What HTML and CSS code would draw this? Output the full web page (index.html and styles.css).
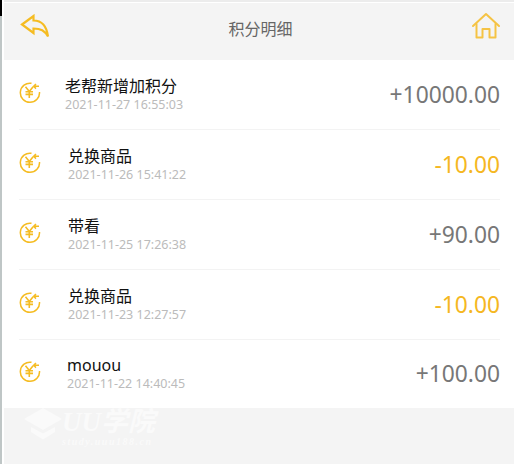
FILE: index.html
```html
<!DOCTYPE html>
<html lang="zh">
<head>
  <meta charset="UTF-8">
  <meta name="viewport" content="width=device-width, initial-scale=1.0">
  <title>积分明细</title>
  <link rel="stylesheet" href="styles.css">
</head>
<body>
  <div class="edge"></div>
  <section class="page">
    <header class="topBar">
      <svg class="backIcon" width="30" height="25" viewBox="0 0 30 25">
        <path d="M2 10.5 L13.5 2 L13.5 6.5 C21 6.5 26.5 11 28 22.5 C24.5 16.5 21 14.5 13.5 14.5 L13.5 19 Z" />
      </svg>
      <h1>积分明细</h1>
      <svg class="homeIcon" width="30" height="28" viewBox="0 0 30 28">
        <path d="M2 14 L15 2 L28 14" />
        <path d="M5.5 12 V25.5 H11.5 V17 H18.5 V25.5 H24.5 V12" />
      </svg>
    </header>

    <ul class="logList">
      <li class="logItem">
        <svg class="coinIcon" width="22" height="22" viewBox="0 0 22 22"><use href="#coin"/></svg>
        <div class="logText first">
          <span class="logName">老帮新增加积分</span>
          <span class="logDate">2021-11-27 16:55:03</span>
        </div>
        <span class="amount plus">+10000.00</span>
      </li>
      <li class="logItem">
        <svg class="coinIcon" width="22" height="22" viewBox="0 0 22 22"><use href="#coin"/></svg>
        <div class="logText">
          <span class="logName">兑换商品</span>
          <span class="logDate">2021-11-26 15:41:22</span>
        </div>
        <span class="amount minus">-10.00</span>
      </li>
      <li class="logItem">
        <svg class="coinIcon" width="22" height="22" viewBox="0 0 22 22"><use href="#coin"/></svg>
        <div class="logText">
          <span class="logName">带看</span>
          <span class="logDate">2021-11-25 17:26:38</span>
        </div>
        <span class="amount plus">+90.00</span>
      </li>
      <li class="logItem">
        <svg class="coinIcon" width="22" height="22" viewBox="0 0 22 22"><use href="#coin"/></svg>
        <div class="logText">
          <span class="logName">兑换商品</span>
          <span class="logDate">2021-11-23 12:27:57</span>
        </div>
        <span class="amount minus">-10.00</span>
      </li>
      <li class="logItem">
        <svg class="coinIcon" width="22" height="22" viewBox="0 0 22 22"><use href="#coin"/></svg>
        <div class="logText">
          <span class="logName">mouou</span>
          <span class="logDate">2021-11-22 14:40:45</span>
        </div>
        <span class="amount plus">+100.00</span>
      </li>
    </ul>

    <footer class="bottom">
      <div class="mark">
        <svg width="38" height="32" viewBox="0 0 38 32">
          <path d="M19 0 L38 11 L19 22 L0 11 Z" />
          <path d="M7 19 L19 25.5 L31 19 V24 L19 31.5 L7 24 Z" />
        </svg>
        <div class="markText">
          <span class="markName">UU学院</span>
          <span class="markUrl">study.uuu188.cn</span>
        </div>
      </div>
    </footer>
  </section>

  <svg class="defs" width="0" height="0">
    <defs>
      <g id="coin" fill="none" stroke="#f5bc22">
        <path d="M12.5 1.3 A9.6 9.6 0 1 0 20.5 10" stroke-width="1.5"/>
        <path d="M6.5 4.8 L10.3 9.5 L14.1 4.8 M6.5 9.8 H14 M6.5 12.4 H14 M10.3 9.5 V16" stroke-width="1.6"/>
        <path d="M20 4.3 H14.8 M17 2 L14.7 4.3 L17 6.6" stroke-width="1.5"/>
      </g>
    </defs>
  </svg>
</body>
</html>
```

FILE: styles.css
```css
* {
  box-sizing: border-box;
}

html, body {
  height: 100%;
}

body {
  margin: 0;
  display: flex;
  overflow: hidden;
  background: #fff;
  font-family: "Noto Sans", "Noto Sans CJK SC", sans-serif;
}

.edge {
  width: 2px;
  margin-right: 2px;
  flex-shrink: 0;
  background: linear-gradient(#000 16px, #bfc6c6 16px);
}

.page {
  flex: 1;
  display: flex;
  flex-direction: column;
  border-top: 2px solid #ececec;
  padding-top: 1px;
}

.topBar {
  height: 57px;
  display: flex;
  align-items: center;
  justify-content: space-between;
  padding: 0 13px 8px 16px;
  background: #f4f4f4;
}
.topBar h1 {
  margin: 0;
  font-size: 16px;
  font-weight: 400;
  color: #666;
}

.backIcon, .homeIcon {
  margin-bottom: 3px;
}
.backIcon path {
  fill: none;
  stroke: #f5bc22;
  stroke-width: 2.2;
  stroke-linejoin: miter;
}
.homeIcon path {
  fill: none;
  stroke: #f5c344;
  stroke-width: 2;
  stroke-linejoin: round;
  stroke-linecap: round;
}

.logList {
  list-style: none;
  margin: 0;
  padding: 0 14px 0 15px;
}
.logItem {
  height: 70px;
  display: flex;
  align-items: center;
  border-bottom: 1px solid #f3f3f3;
}
.logItem:last-child {
  height: 68px;
  border-bottom: 0;
}
.logItem:last-child .logText {
  margin-left: 26px;
}

.coinIcon {
  flex-shrink: 0;
  margin-bottom: 4px;
}

.logText {
  flex: 1;
  display: flex;
  flex-direction: column;
  margin-left: 27px;
}
.logText.first {
  margin-left: 24px;
}
.logName {
  font-size: 16px;
  line-height: 20px;
  color: #111;
}
.logDate {
  font-size: 12.5px;
  line-height: 18px;
  color: #bbb;
}

.amount {
  font-size: 22.8px;
  line-height: 30px;
}
.amount.plus {
  color: #777;
}
.amount.minus {
  color: #f5b722;
}

.bottom {
  flex: 1;
  background: #f4f4f4;
  padding: 0 0 0 20px;
}
.mark {
  display: flex;
  align-items: flex-start;
  color: #fafafa;
}
.mark svg {
  fill: #fafafa;
}
.markText {
  display: flex;
  flex-direction: column;
  font-family: "Liberation Serif", "Noto Sans CJK SC", serif;
  font-style: italic;
  font-weight: 700;
}
.markName {
  font-size: 27px;
  line-height: 28px;
}
.markUrl {
  font-size: 10px;
  line-height: 12px;
  letter-spacing: 1.5px;
}

.defs {
  position: absolute;
}
```
